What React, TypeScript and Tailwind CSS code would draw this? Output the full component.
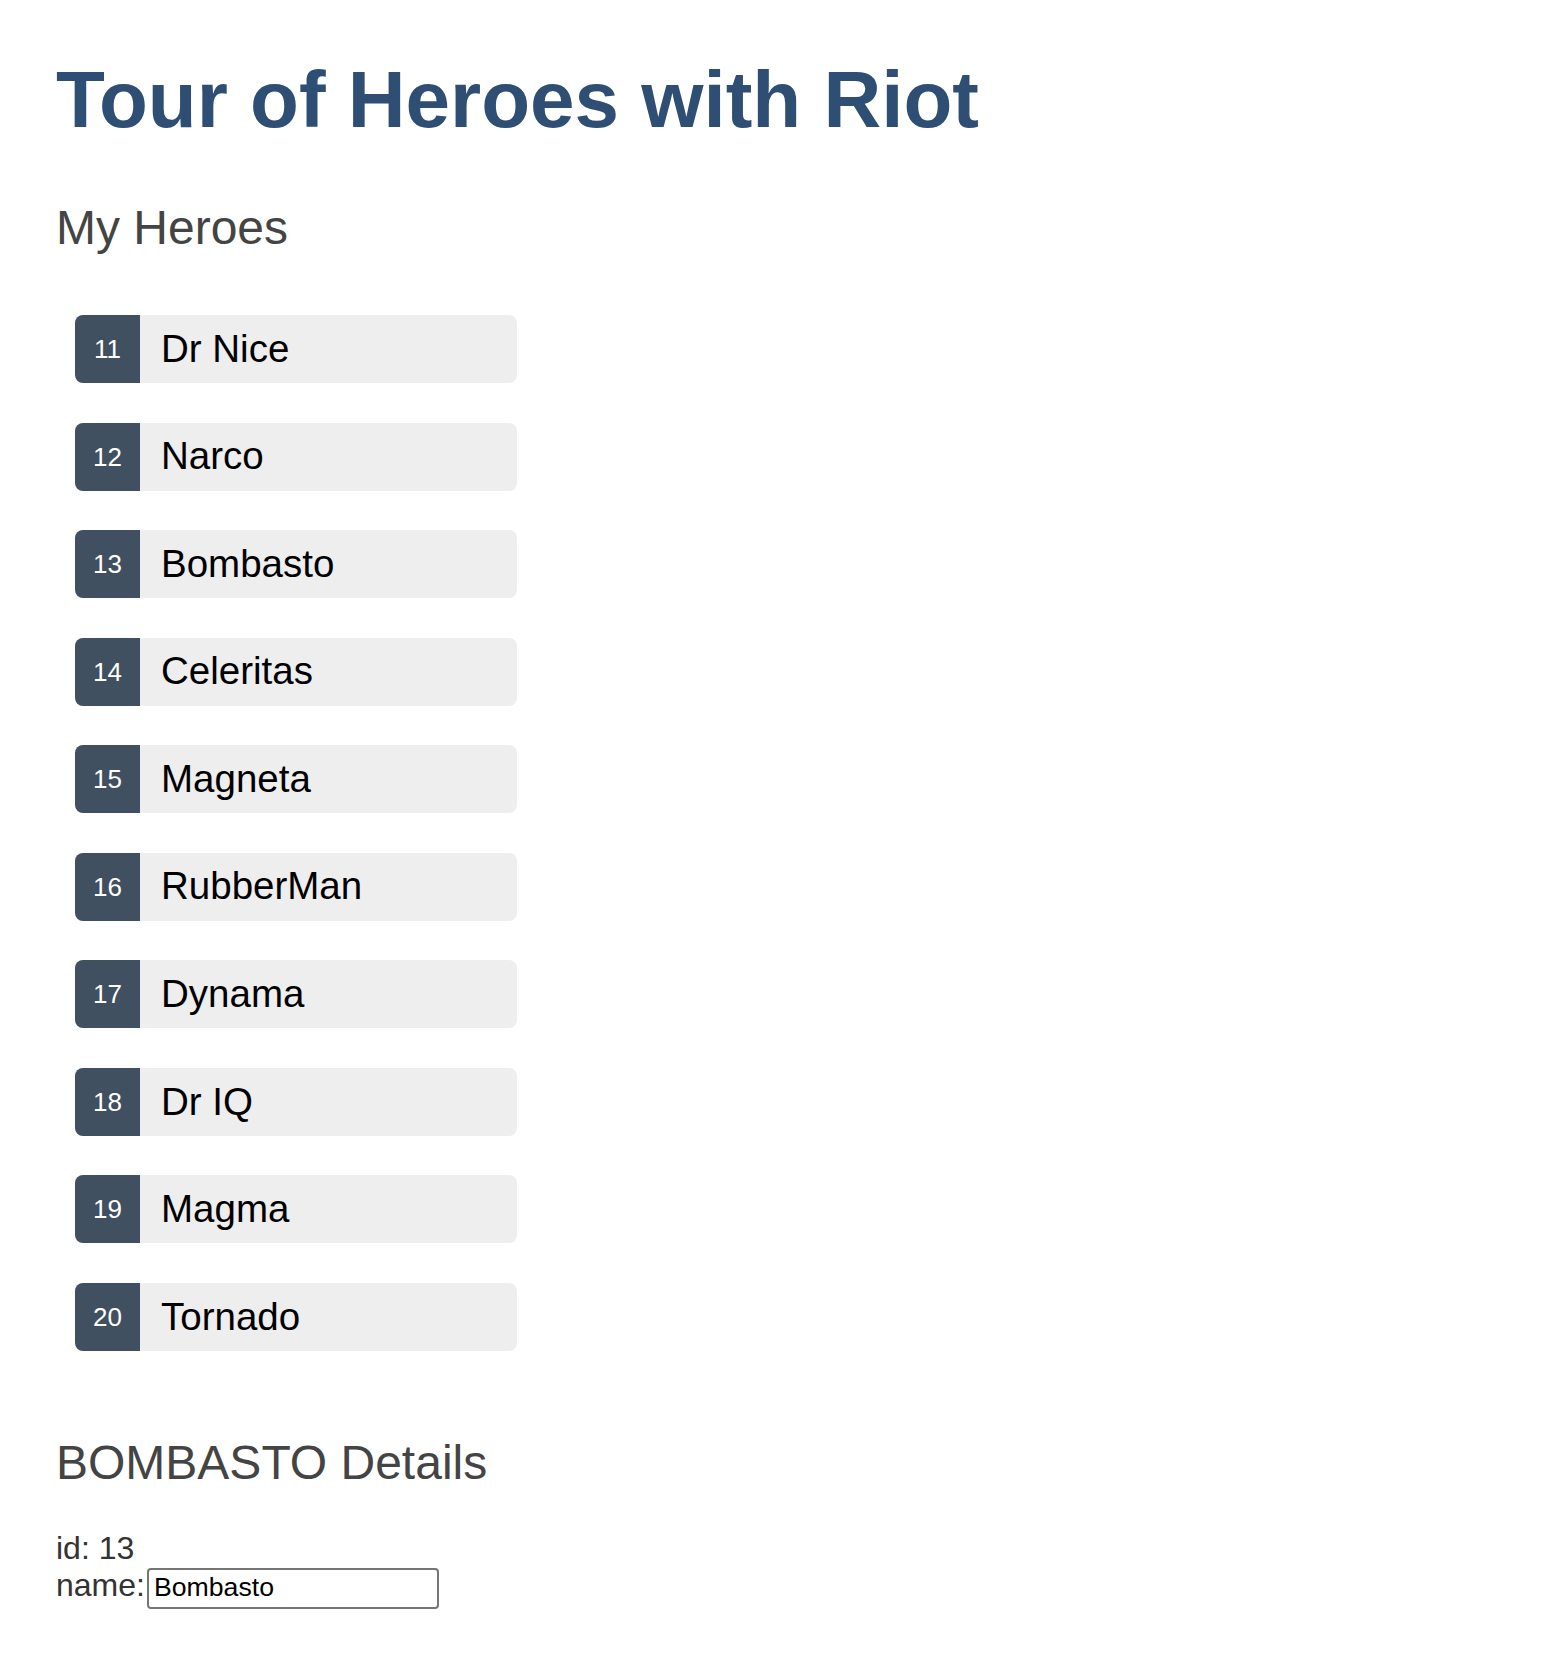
import React from "react";

const heroes = [
  { id: 11, name: "Dr Nice" },
  { id: 12, name: "Narco" },
  { id: 13, name: "Bombasto" },
  { id: 14, name: "Celeritas" },
  { id: 15, name: "Magneta" },
  { id: 16, name: "RubberMan" },
  { id: 17, name: "Dynama" },
  { id: 18, name: "Dr IQ" },
  { id: 19, name: "Magma" },
  { id: 20, name: "Tornado" },
];

export default function App() {
  return (
    <div className="min-h-[1654px] bg-white pl-[56px] pt-[60px] font-['Liberation_Sans',Arial,Helvetica,sans-serif]">
      <h1 className="text-[80px] leading-[80px] font-bold text-[#2f4e73] whitespace-nowrap">
        Tour of Heroes with Riot
      </h1>
      <h2 className="mt-[64.4px] text-[48px] leading-[48px] font-normal text-[#444444]">
        My Heroes
      </h2>
      <ul className="mt-[62.6px] ml-[19px] flex w-[442px] flex-col gap-[39.55px]">
        {heroes.map((h) => (
          <li
            key={h.id}
            className="flex h-[68px] items-center rounded-[8px] bg-[#eeeeee]"
          >
            <span className="flex h-full w-[65px] items-center justify-center rounded-l-[8px] bg-[#405061] text-[26px] leading-none text-white">
              {h.id}
            </span>
            <span className="ml-[21px] text-[38.5px] leading-none text-black">
              {h.name}
            </span>
          </li>
        ))}
      </ul>
      <h2 className="mt-[88.4px] text-[48px] leading-[48px] font-normal text-[#444444]">
        BOMBASTO Details
      </h2>
      <div className="mt-[43px] text-[32px] leading-[36.8px] text-[#333333]">
        id: 13
      </div>
      <div className="flex items-start text-[32px] leading-[36.8px] text-[#333333]">
        <span>name:</span>
        <input
          defaultValue="Bombasto"
          className="ml-[2px] mt-[0.5px] box-border h-[41px] w-[292px] rounded-[4px] border-2 border-[#767676] bg-white pl-[5px] pr-[5px] pt-[1px] pb-[3px] text-[26.67px] text-black outline-none font-['Liberation_Sans',Arial,sans-serif]"
        />
      </div>
    </div>
  );
}
